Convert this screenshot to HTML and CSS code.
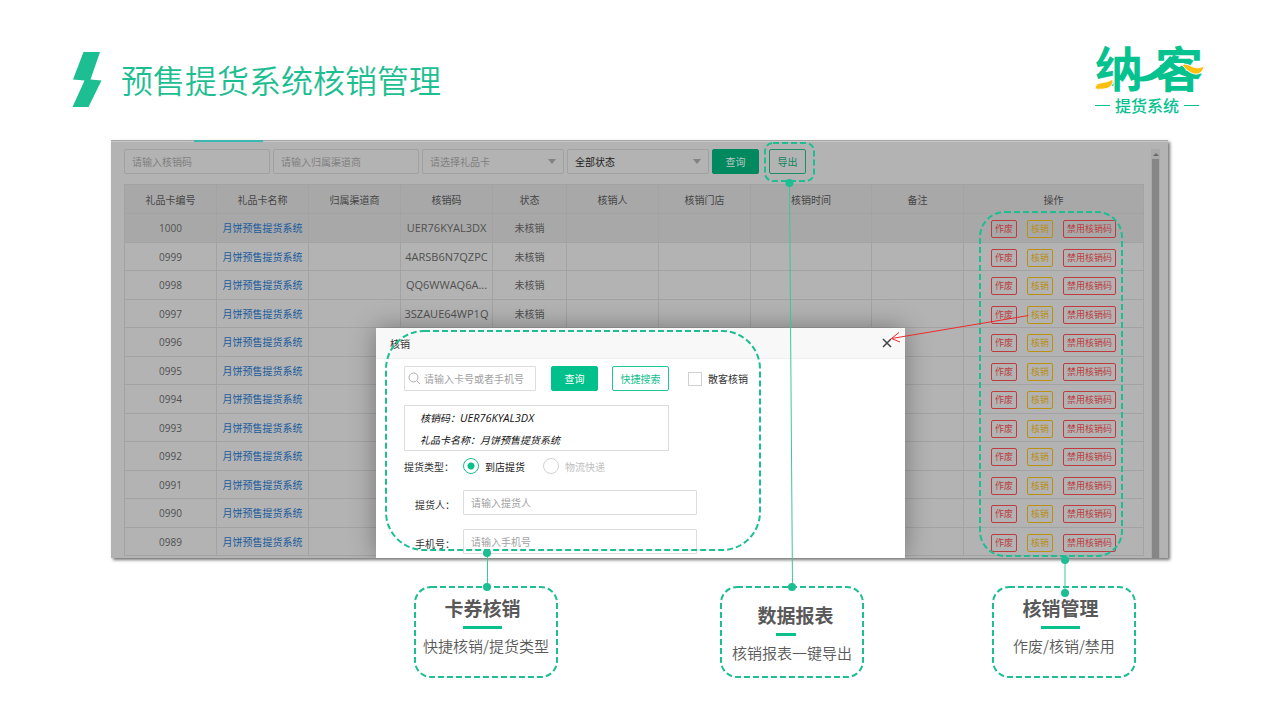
FILE: index.html
```html
<!DOCTYPE html>
<html lang="zh-CN">
<head>
<meta charset="utf-8">
<title>预售提货系统核销管理</title>
<link rel="stylesheet" href="styles.css">
</head>
<body>
<main class="slide">
  <header class="head">
    <svg class="bolt" width="30" height="56" viewBox="0 0 30 56" aria-hidden="true"><path d="M11.5 0H28L18.5 27.5L29.5 28.5L16.500 55H.5L12.500 28.500L1 27.500Z"/></svg>
    <h1 class="title">预售提货系统核销管理</h1>
    <div class="logo">
      <div class="logo-name"><span>纳</span><span>客</span>
        <svg class="logo-swoosh" width="110" height="52" viewBox="0 0 110 52" aria-hidden="true">
          <path class="green" d="M36 30C48 37 59 30 75 12L81 16C68 33 54 42 36 35Z"/>
          <path class="halo" d="M0 45C1 36 8 41 18 35C19 45 9 46 0 45Z"/>
          <path class="halo" d="M87 21C94 17 98 28 109 22C107 33 97 33 87 21Z"/>
        </svg>
      </div>
      <div class="logo-sub">提货系统</div>
    </div>
  </header>

  <section class="panel">
    <span class="tab-line"></span>
    <form class="toolbar">
      <input class="field w-code" type="text" placeholder="请输入核销码" aria-label="核销码">
      <input class="field w-code" type="text" placeholder="请输入归属渠道商" aria-label="归属渠道商">
      <span class="pick"><select class="field muted" aria-label="礼品卡"><option>请选择礼品卡</option></select></span>
      <span class="pick"><select class="field" aria-label="状态"><option>全部状态</option></select></span>
      <button class="btn dim" type="button">查询</button>
      <button class="btn outline-dim" type="button">导出</button>
    </form>
    <table class="grid">
      <colgroup><col class="c92"><col class="c92"><col class="c92"><col class="c92"><col class="c74"><col class="c92"><col class="c92"><col class="c121"><col class="c92"><col></colgroup>
      <thead><tr><th>礼品卡编号</th><th>礼品卡名称</th><th>归属渠道商</th><th>核销码</th><th>状态</th><th>核销人</th><th>核销门店</th><th>核销时间</th><th>备注</th><th>操作</th></tr></thead>
      <tbody id="rows"></tbody>
    </table>
    <div class="scroll"><span class="scroll-up"></span><span class="scroll-thumb"></span></div>

    <div class="dialog" role="dialog" aria-label="核销">
      <div class="dialog-head"><span>核销</span>
        <button class="close" type="button" aria-label="关闭"><svg width="10" height="10" viewBox="0 0 10 10"><path d="M1 1L9 9M9 1L1 9"/></svg></button>
      </div>
      <form class="dialog-body">
        <div class="search-row">
          <span class="search"><svg width="13" height="13" viewBox="0 0 13 13" aria-hidden="true"><circle cx="5.500" cy="5.500" r="4.500"/><path d="M9 9L12 12"/></svg><input class="box" type="text" placeholder="请输入卡号或者手机号" aria-label="卡号或者手机号"></span>
          <button class="btn solid" type="button">查询</button>
          <button class="btn outline" type="button">快捷搜索</button>
          <label class="check"><input type="checkbox">散客核销</label>
        </div>
        <div class="info"><p>核销码：<span class="code">UER76KYAL3DX</span></p><p>礼品卡名称：月饼预售提货系统</p></div>
        <div class="radios"><span>提货类型：</span>
          <label class="radio"><input type="radio" name="kind" checked>到店提货</label>
          <label class="radio off"><input type="radio" name="kind" disabled>物流快递</label>
        </div>
        <div class="line"><label for="who">提货人：</label><input class="box" id="who" type="text" placeholder="请输入提货人"></div>
        <div class="line"><label for="tel">手机号：</label><input class="box" id="tel" type="text" placeholder="请输入手机号"></div>
      </form>
    </div>
  </section>

  <div class="callouts">
    <section class="card">
      <svg class="frame"><rect x="1" y="1" rx="16"/></svg>
      <h2>卡券核销</h2><span class="bar"></span><p>快捷核销/提货类型</p>
    </section>
    <section class="card middle">
      <svg class="frame"><rect x="1" y="1" rx="16"/></svg>
      <h2>数据报表</h2><span class="bar"></span><p>核销报表一键导出</p>
    </section>
    <section class="card">
      <svg class="frame"><rect x="1" y="1" rx="16"/></svg>
      <h2>核销管理</h2><span class="bar"></span><p>作废/核销/禁用</p>
    </section>
  </div>

  <svg class="marks" width="1280" height="720" viewBox="0 0 1280 720" aria-hidden="true">
    <g class="dashes">
      <rect x="765" y="143" width="49" height="38" rx="8"/>
      <rect x="980" y="212" width="142" height="344" rx="25"/>
      <rect x="386" y="331" width="374" height="219" rx="38"/>
    </g>
    <g class="links"><path d="M487.500 553V587"/><path d="M789.500 183L792.500 587"/><path d="M1065 560V593"/></g>
    <g class="dots"><circle cx="487" cy="553" r="4"/><circle cx="487" cy="587" r="4"/><circle cx="789.500" cy="183" r="4"/><circle cx="792" cy="587" r="4"/><circle cx="1065" cy="560" r="4"/><circle cx="1065" cy="593" r="4"/></g>
    <path class="arrow" d="M1028.500 315.500L891.500 338.500M899 332.500L891.500 338.500L900 342"/>
  </svg>
</main>
<script src="rows.js"></script>
</body>
</html>
```
FILE: rows.js
```js
const codes = ["UER76KYAL3DX", "4ARSB6N7QZPC", "QQ6WWAQ6A...", "3SZAUE64WP1Q"];
const body = document.getElementById("rows");
for (let i = 0; i < 12; i++) {
  const tr = document.createElement("tr");
  const id = String(1000 - i).padStart(4, "0");
  tr.innerHTML =
    `<td>${id}</td><td><a href="#">月饼预售提货系统</a></td><td></td>` +
    `<td class="code">${codes[i] || ""}</td><td>${codes[i] ? "未核销" : ""}</td>` +
    `<td></td><td></td><td></td><td></td>` +
    `<td><div class="ops"><button class="op red" type="button">作废</button>` +
    `<button class="op gold" type="button">核销</button>` +
    `<button class="op red" type="button">禁用核销码</button></div></td>`;
  body.appendChild(tr);
}
```
FILE: styles.css
```css
* { box-sizing: border-box; }
body { margin: 0; background: #fff; font-family: "Open Sans", "Noto Sans CJK SC", sans-serif; font-size: 10px; color: #333; }
h1, h2, p { margin: 0; }
input, select, button { font: inherit; margin: 0; }
.slide { position: relative; min-height: 720px; overflow: hidden; }

.head { display: flex; height: 140px; padding: 44px 77px 0 72px; }
.bolt { margin-top: 8px; fill: #1dbe92; }
.title { margin-left: 19px; font-family: "Noto Sans CJK SC", sans-serif; font-size: 32px; font-weight: 350; line-height: 70px; color: #1dbe92; }
.logo { width: 108px; margin-left: auto; font-family: "Noto Sans CJK SC", sans-serif; color: #06c28f; }
.logo-name { position: relative; display: flex; justify-content: space-between; height: 53px; font-size: 48px; font-weight: 700; line-height: 44px; }
.logo-swoosh { position: absolute; left: 0; top: 0; }
.green { fill: #06c28f; }
.halo { fill: #fdbf0f; stroke: #fff; stroke-width: 1; }
.logo-sub { display: flex; align-items: center; gap: 5px; font-size: 16px; font-weight: 500; line-height: 16px; white-space: nowrap; }
.logo-sub::before, .logo-sub::after { content: ""; width: 15px; height: 1px; background: #06c28f; }

.panel { position: relative; margin: 0 112px 0 111px; padding: 8px 24px 2px 13px; border-top: 1px solid #a6a6a6; background: #b3b3b3; box-shadow: inset 0 1px #c6c6c6, 2px 2px 3px rgba(0, 0, 0, .55); }
.tab-line { position: absolute; left: 83px; top: -1px; width: 69px; height: 2px; background: #3bb8b0; }
.toolbar { display: flex; gap: 3px; height: 25px; margin-bottom: 10px; }
.field { width: 100%; height: 25px; padding: 0 7px; border: 1px solid #a1a1a1; border-radius: 2px; background: transparent; color: #222; appearance: none; outline: 0; }
.field::placeholder { color: #808080; opacity: 1; }
.w-code { width: 146px; }
.muted { color: #808080; }
.pick { position: relative; width: 142px; }
.pick::after { content: ""; position: absolute; right: 8px; top: 10px; border: 4px solid transparent; border-top: 5px solid #828282; border-bottom: 0; }
.btn { height: 25px; padding: 0; border: 1px solid; border-radius: 2px; }
.dim { width: 47px; border-color: #00895f; background: #00895f; color: #b8c8c2; }
.outline-dim { width: 37px; margin-left: 7px; border-color: #1b9068; background: transparent; color: #0c8660; }

.grid { width: 100%; height: 372px; table-layout: fixed; border-collapse: collapse; color: #505050; }
.c92 { width: 92px; }
.c74 { width: 74px; }
.c121 { width: 121px; }
.grid th, .grid td { padding: 0; border: 1px solid #a3a3a3; text-align: center; font-weight: 400; line-height: 14px; white-space: nowrap; }
.grid th { height: 29px; padding-top: 2px; color: #454545; }
.grid td { padding-top: 1px; }
.grid thead, .grid tbody tr:first-child { background: #a8a8a8; }
.grid a { color: #1a5c9d; text-decoration: none; }
.code { font-size: 11px; }
.ops { display: flex; justify-content: center; gap: 10px; padding-top: 2px; }
.op { height: 18px; padding: 0 3px; border: 1px solid; border-radius: 2px; background: transparent; font-size: 9px; line-height: 14px; }
.red { color: #bd3c40; }
.gold { color: #b98f14; }
.scroll { position: absolute; right: 8px; top: 8px; bottom: 0; width: 9px; display: flex; flex-direction: column; align-items: center; background: #a9a9a9; }
.scroll-up { margin: 4px 0 3px; border: 3px solid transparent; border-bottom: 3px solid #6a6a6a; border-top: 0; }
.scroll-thumb { flex: 1; width: 7px; background: #868686; }

.dialog { position: absolute; left: 265px; top: 187px; bottom: 0; width: 529px; overflow: hidden; background: #fff; }
.panel::before { content: ""; position: absolute; left: 265px; top: 187px; bottom: 0; width: 529px; box-shadow: 0 0 24px rgba(0, 0, 0, .35); clip-path: inset(-50px -50px 0 -50px); }
.dialog-head { display: flex; align-items: center; justify-content: space-between; height: 31px; padding: 0 13px 0 14px; border-bottom: 1px solid #eee; background: #f8f8f8; }
.close { display: flex; padding: 0; border: 0; background: none; }
.close path { stroke: #444; stroke-width: 1.5; }
.dialog-body { padding: 7px 29px 0 28px; }
.search-row { display: flex; height: 25px; }
.search { position: relative; width: 132px; }
.search svg { position: absolute; left: 4px; top: 6px; fill: none; stroke: #b0b0b0; stroke-width: 1; }
.box { width: 100%; height: 25px; padding: 0 7px; border: 1px solid #ddd; border-radius: 1px; background: #fff; outline: 0; }
.search .box { padding-left: 19px; }
.box::placeholder { color: #a2a2a2; opacity: 1; }
.solid { width: 47px; margin-left: 15px; border-color: #00c08b; background: #00c08b; color: #fff; }
.outline { width: 57px; margin-left: 14px; border-color: #1fc796; background: #fff; color: #0fc08c; }
.check { display: flex; align-items: center; gap: 6px; margin-left: 19px; }
.check input { width: 14px; height: 14px; border: 1px solid #d2d2d2; appearance: none; }
.info { width: 265px; height: 46px; margin-top: 14px; padding: 1px 15px; border: 1px solid #ddd; font-style: italic; line-height: 22px; color: #111; }
.radios { display: flex; align-items: center; height: 30px; }
.radios > span { width: 59px; white-space: nowrap; }
.radio { display: flex; align-items: center; gap: 6px; margin-right: 18px; color: #222; }
.radio input { width: 16px; height: 16px; border: 1px solid #d2d2d2; border-radius: 50%; appearance: none; }
.radio input:checked { border-color: #1dbe92; background: radial-gradient(circle, #06c08c 3px, transparent 4px); }
.off { color: #c0c0c0; }
.line { display: flex; align-items: center; margin: 9px 0 14px; }
.line label { width: 59px; padding: 4px 8px 0 0; text-align: right; white-space: nowrap; }
.line .box { width: 234px; }

.callouts { display: flex; align-items: flex-start; padding: 28px 0 0 414px; font-family: "Noto Sans CJK SC", sans-serif; color: #595959; }
.card { position: relative; display: flex; flex-direction: column; align-items: center; width: 144px; height: 92px; padding-top: 10px; }
.card h2 { margin-right: 7px; font-size: 19px; line-height: 24px; }
.bar { width: 39px; height: 3px; margin: 6px 7px 6px 0; background: #0ac18c; }
.card p { font-size: 15px; font-weight: 350; line-height: 22px; white-space: nowrap; }
.middle { margin: 0 128px 0 162px; padding-top: 17px; }
.middle h2 { margin: 0 0 0 7px; }
.middle .bar { width: 20px; margin: 6px 12px 6px 0; }
.frame { position: absolute; left: 0; top: 0; width: 100%; height: 100%; }
.frame rect { width: calc(100% - 2px); height: calc(100% - 2px); }
.frame rect, .dashes { fill: none; stroke: #1dbe92; stroke-width: 2; stroke-dasharray: 6 3; }
.marks { position: absolute; left: 0; top: 0; pointer-events: none; }
.links { stroke: #3cc69d; stroke-width: 1; }
.dots { fill: #1dbe92; }
.arrow { fill: none; stroke: #ee2a2a; stroke-width: 1; }
```
